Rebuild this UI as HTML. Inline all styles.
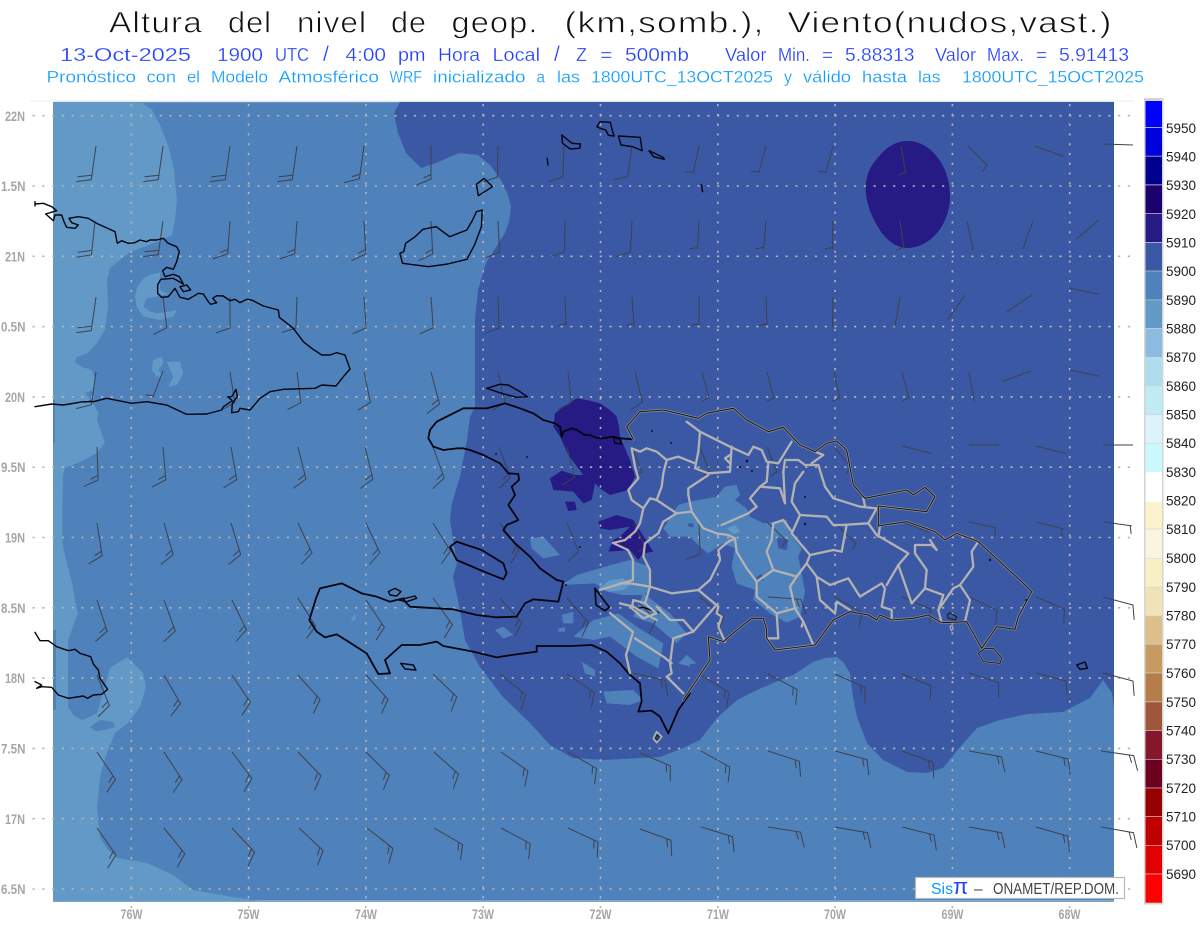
<!DOCTYPE html>
<html><head><meta charset="utf-8"><title>Altura del nivel de geop.</title>
<style>
html,body{margin:0;padding:0;background:#fff}
svg{display:block}
text{font-family:"Liberation Sans",sans-serif}
.t text{font-size:30px;fill:#111;stroke:#fff;stroke-width:.7px;letter-spacing:1px}
.l2 text{font-size:18.5px;fill:#2440ff;stroke:#fff;stroke-width:.25px}
.l3 text{font-size:17px;fill:#0a9aff;stroke:#fff;stroke-width:.25px}
.ax{font-size:14px;fill:#a6a6a6;font-weight:bold}
.cb{font-size:13.5px;fill:#222}
.k path,.k polygon{vector-effect:non-scaling-stroke}
.w use{stroke:#3d424e;stroke-width:1;fill:none}
</style></head><body>
<svg xmlns="http://www.w3.org/2000/svg" width="1200" height="927" viewBox="0 0 1200 927">
<rect width="1200" height="927" fill="#fff"/>
<g class="t">
<text x="109" y="32.5" textLength="94" lengthAdjust="spacingAndGlyphs">Altura</text>
<text x="228" y="32.5" textLength="44" lengthAdjust="spacingAndGlyphs">del</text>
<text x="297" y="32.5" textLength="70" lengthAdjust="spacingAndGlyphs">nivel</text>
<text x="391" y="32.5" textLength="36" lengthAdjust="spacingAndGlyphs">de</text>
<text x="451.5" y="32.5" textLength="87" lengthAdjust="spacingAndGlyphs">geop.</text>
<text x="564.5" y="32.5" textLength="200" lengthAdjust="spacingAndGlyphs">(km,somb.),</text>
<text x="787.5" y="32.5" textLength="325" lengthAdjust="spacingAndGlyphs">Viento(nudos,vast.)</text>
</g>
<g class="l2">
<text x="60" y="61" textLength="131" lengthAdjust="spacingAndGlyphs">13-Oct-2025</text>
<text x="217" y="61" textLength="46" lengthAdjust="spacingAndGlyphs">1900</text>
<text x="275" y="61" textLength="34" lengthAdjust="spacingAndGlyphs">UTC</text>
<text x="323" y="61" style="font-size:21px">/</text>
<text x="345.5" y="61" textLength="40.5" lengthAdjust="spacingAndGlyphs">4:00</text>
<text x="398" y="61" textLength="27.5" lengthAdjust="spacingAndGlyphs">pm</text>
<text x="438" y="61" textLength="42" lengthAdjust="spacingAndGlyphs">Hora</text>
<text x="492.5" y="61" textLength="47.5" lengthAdjust="spacingAndGlyphs">Local</text>
<text x="554" y="61" style="font-size:21px">/</text>
<text x="576" y="61" textLength="11" lengthAdjust="spacingAndGlyphs">Z</text>
<text x="600" y="61" textLength="12.5" lengthAdjust="spacingAndGlyphs">=</text>
<text x="625" y="61" textLength="64" lengthAdjust="spacingAndGlyphs">500mb</text>
<text x="725" y="61" textLength="41.5" lengthAdjust="spacingAndGlyphs">Valor</text>
<text x="778" y="61" textLength="32" lengthAdjust="spacingAndGlyphs">Min.</text>
<text x="822" y="61" textLength="11" lengthAdjust="spacingAndGlyphs">=</text>
<text x="845" y="61" textLength="69.5" lengthAdjust="spacingAndGlyphs">5.88313</text>
<text x="935" y="61" textLength="41" lengthAdjust="spacingAndGlyphs">Valor</text>
<text x="987" y="61" textLength="37" lengthAdjust="spacingAndGlyphs">Max.</text>
<text x="1036" y="61" textLength="11" lengthAdjust="spacingAndGlyphs">=</text>
<text x="1059" y="61" textLength="70" lengthAdjust="spacingAndGlyphs">5.91413</text>
</g>
<g class="l3">
<text x="46.5" y="82.5" textLength="89.5" lengthAdjust="spacingAndGlyphs">Pronóstico</text>
<text x="146.5" y="82.5" textLength="29.5" lengthAdjust="spacingAndGlyphs">con</text>
<text x="187" y="82.5" textLength="13" lengthAdjust="spacingAndGlyphs">el</text>
<text x="211" y="82.5" textLength="57" lengthAdjust="spacingAndGlyphs">Modelo</text>
<text x="278.5" y="82.5" textLength="100.5" lengthAdjust="spacingAndGlyphs">Atmosférico</text>
<text x="389.5" y="82.5" textLength="32.5" lengthAdjust="spacingAndGlyphs">WRF</text>
<text x="433" y="82.5" textLength="92.5" lengthAdjust="spacingAndGlyphs">inicializado</text>
<text x="536.5" y="82.5" textLength="8.5" lengthAdjust="spacingAndGlyphs">a</text>
<text x="557" y="82.5" textLength="23" lengthAdjust="spacingAndGlyphs">las</text>
<text x="591" y="82.5" textLength="182" lengthAdjust="spacingAndGlyphs">1800UTC_13OCT2025</text>
<text x="784" y="82.5" textLength="8" lengthAdjust="spacingAndGlyphs">y</text>
<text x="803" y="82.5" textLength="48" lengthAdjust="spacingAndGlyphs">válido</text>
<text x="862" y="82.5" textLength="45" lengthAdjust="spacingAndGlyphs">hasta</text>
<text x="918" y="82.5" textLength="22.5" lengthAdjust="spacingAndGlyphs">las</text>
<text x="962" y="82.5" textLength="182" lengthAdjust="spacingAndGlyphs">1800UTC_15OCT2025</text>
</g>

<rect x="30" y="100.5" width="1104" height="1" fill="#eeeeee"/>
<rect x="53" y="102" width="1061" height="799" fill="#4f81bb"/>
<rect x="53" y="900" width="1061" height="2" fill="#7aa8d3"/>
<rect x="53" y="101" width="1061" height="1.2" fill="#dfe6ee"/>
<g class="k">
<path fill="#6399c7" d="M53 102L141 102L152 110L160 125L168 145L174 170L177 200L175 220L172 235L157 242L130 252L110 268L107 280L108 307L105 330L97 343L88 353L77 357L75 362L82 367L92 370L95 380L93 390L85 393L93 403L98 413L97 420L105 443L97 453L80 462L65 468L63 475L62 530L63 547L72 583L77 610L78 613L68 640L68 707L74 716L83 720L97 713L104 690L110 668L127 657L143 673L146 687L140 707L128 723L115 733L106 755L100 777L97 807L100 837L108 850L117 858L147 863L173 875L193 890L233 897L260 901L53 901Z"/>
<path fill="#4f81bb" d="M90 727L100 720L113 722L115 727L105 730L95 731Z"/>
<rect x="53" y="630" width="3" height="80" fill="#4f81bb"/>
<rect x="53" y="400" width="2" height="43" fill="#4f81bb"/>
<g transform="translate(0,180) scale(.33333)" fill="#6399c7">
<path d="M405 350L412 320L430 295L450 284L480 278L480 330L495 338L510 340L470 350L440 355L430 380L450 395L470 400L510 395L530 390L520 410L480 420L430 410L410 380Z"/>
<path d="M455 570L460 540L485 530L490 550L475 570L490 590L470 590Z"/>
<path d="M500 545L540 545L550 580L530 615L505 620L520 590Z"/>
</g>
<path fill="#3b58a4" d="M400 102L394 113L398 133L406 153L421 168L436 163L459 153L478 155L490 165L501 180L508 195L511 207L509 222L505 233L486 263L478 290L475 320L475 380L475 407L470 417L467 440L460 477L452 503L450 520L453 540L457 563L453 577L460 610L465 640L480 667L503 697L530 723L550 745L573 758L605 760L640 758L660 757L683 748L700 740L717 718L737 700L757 690L773 683L793 675L813 662L825 658L837 657L843 662L850 673L853 697L857 717L867 743L883 760L907 772L927 773L943 768L960 747L977 728L1000 720L1027 714L1063 712L1090 698L1103 680L1112 693L1114 708L1114 102Z"/>
<path fill="#261a85" d="M908 141C930 141 950 165 950 196C950 225 930 248 907 248C888 248 875 225 869 208C863 190 865 172 876 160C885 148 895 141 908 141Z"/>
<g transform="translate(420,380) scale(.33333)" fill="#261a85">
<path d="M405 100L430 80L470 55L510 62L540 70L570 90L590 110L597 140L600 170L615 205L630 240L645 290L625 330L570 345L540 325L525 310L515 360L490 370L460 335L400 330L390 295L425 272L465 285L490 285L445 225L420 170L400 140Z"/>
<path d="M435 365L465 365L470 390L445 393Z"/>
<path d="M535 425L590 405L640 420L665 460L700 515L670 520L655 540L630 510L565 515L580 480L600 470L630 440L570 450L540 445Z"/>
</g>
<g transform="translate(620,400) scale(.33333)" fill="#4f81bb">
<path d="M160 340L175 315L210 305L290 290L315 260L350 255L360 285L345 300L380 325L390 350L430 370L470 365L500 360L510 400L545 445L535 470L545 520L555 575L540 650L500 668L450 640L400 600L405 570L350 550L335 500L345 445L310 430L265 460L245 445L210 410L150 410L130 385Z"/>
<path fill="#6399c7" d="M320 385L345 375L362 395L340 402Z"/>
<path fill="#3b58a4" d="M470 410L505 420L500 450L475 445Z"/>
<path fill="#3b58a4" d="M205 370L220 370L220 382L205 380Z"/>
<path fill="#3b58a4" d="M410 530L425 522L430 540L412 545Z"/>
<path d="M175 790L200 765L230 790L190 795Z"/>
</g>
<g transform="translate(290,520) scale(.33333)" fill="#4f81bb">
<path d="M815 195L860 165L945 140L1020 120L1080 140L1080 205L1065 225L1000 225L950 215L915 190Z"/>
<path d="M850 350L910 300L985 280L1040 320L1120 370L1105 445L1040 410L960 350L910 360Z"/>
<path d="M1060 220L1140 280L1190 340L1160 370L1090 310L1030 290Z"/>
<path d="M720 55L760 50L810 105L760 115L725 85Z"/>
<path d="M815 285L850 275L850 310L820 310Z"/>
<path d="M805 325L825 322L825 335L805 335Z"/>
<path d="M615 330L640 320L670 345L640 355Z"/>
<path d="M875 425L915 450L915 470L885 460Z"/>
<path d="M940 515L1030 510L1060 540L1020 555L950 550Z"/>
<path d="M1170 430L1195 405L1200 440Z"/>
<path fill="#6399c7" d="M925 205L960 180L1000 175L1020 195L1000 210L960 215Z"/>
<path fill="#6399c7" d="M183 295L195 285L198 297L187 303Z"/>
</g>
</g>

<g fill="none" stroke="#b8b4ae" stroke-width="1.6" stroke-dasharray="2.2 7.58">
<path d="M32.5 115.7H1135M32.5 186H1135M32.5 256.3H1135M32.5 326.6H1135M32.5 396.9H1135M32.5 467.2H1135M32.5 537.5H1135M32.5 607.8H1135M32.5 678.1H1135M32.5 748.4H1135M32.5 818.7H1135M32.5 889H1135"/>
<path d="M131.3 104V915M248.6 104V915M365.9 104V915M483.2 104V915M600.5 104V915M717.8 104V915M835.1 104V915M952.4 104V915M1069.7 104V915"/>
</g>

<defs>
<path id="A" d="M0 0V34L-14.5 38M0 29.5L-14 33"/>
<path id="B" d="M0 0V33L-14.5 39M0 28.5L-7.5 32"/>
<path id="C" d="M0 0V31L-14 36"/>
<path id="D" d="M0 0V28M0 26.5L-8 28.5"/>
<path id="E" d="M0 0V30"/>
</defs>
<g class="w">
<use href="#A" transform="translate(96,146)rotate(8)"/><use href="#A" transform="translate(163,146)rotate(8)"/><use href="#A" transform="translate(230,146)rotate(8)"/><use href="#A" transform="translate(297,146)rotate(8)"/><use href="#B" transform="translate(364,146)rotate(8)"/><use href="#B" transform="translate(431,146)rotate(0)"/><use href="#C" transform="translate(498,146)rotate(1)"/><use href="#C" transform="translate(564,146)rotate(2)"/><use href="#C" transform="translate(632,146)rotate(8)"/><use href="#D" transform="translate(699,146)rotate(12)"/><use href="#D" transform="translate(766,146)rotate(15)"/><use href="#D" transform="translate(833,146)rotate(15)"/><use href="#D" transform="translate(901,146)rotate(-10)"/><use href="#D" transform="translate(968,146)rotate(-45)"/><use href="#E" transform="translate(1035,146)rotate(-70)"/><use href="#E" transform="translate(1103,144)rotate(-88)"/>
<use href="#A" transform="translate(95,221)rotate(6)"/><use href="#A" transform="translate(163,221)rotate(8)"/><use href="#B" transform="translate(230,221)rotate(4)"/><use href="#B" transform="translate(297,221)rotate(4)"/><use href="#B" transform="translate(364,221)rotate(-3)"/><use href="#B" transform="translate(431,221)rotate(-3)"/><use href="#C" transform="translate(498,221)rotate(-3)"/><use href="#C" transform="translate(565,221)rotate(1)"/><use href="#C" transform="translate(632,221)rotate(3)"/><use href="#D" transform="translate(699,221)rotate(3)"/><use href="#D" transform="translate(766,221)rotate(5)"/><use href="#D" transform="translate(833,221)rotate(1)"/><use href="#D" transform="translate(900,221)rotate(-8)"/><use href="#E" transform="translate(967,221)rotate(-12)"/><use href="#E" transform="translate(1033,221)rotate(20)"/><use href="#E" transform="translate(1099,220)rotate(50)"/>
<use href="#A" transform="translate(96,297)rotate(8)"/><use href="#C" transform="translate(163,297)rotate(-7)"/><use href="#C" transform="translate(230,297)rotate(0)"/><use href="#C" transform="translate(297,297)rotate(2)"/><use href="#C" transform="translate(364,297)rotate(-4)"/><use href="#C" transform="translate(431,297)rotate(-4)"/><use href="#C" transform="translate(498,297)rotate(-2)"/><use href="#D" transform="translate(565,297)rotate(-2)"/><use href="#D" transform="translate(632,297)rotate(-4)"/><use href="#D" transform="translate(699,297)rotate(0)"/><use href="#D" transform="translate(766,297)rotate(-2)"/><use href="#E" transform="translate(833,297)rotate(1)"/><use href="#E" transform="translate(900,297)rotate(10)"/><use href="#E" transform="translate(965,295)rotate(35)"/><use href="#E" transform="translate(1032,295)rotate(56)"/><use href="#E" transform="translate(1069,288)rotate(-78)"/>
<use href="#B" transform="translate(96,372)rotate(8)"/><use href="#D" transform="translate(163,371)rotate(21)"/><use href="#C" transform="translate(230,372)rotate(-9)"/><use href="#C" transform="translate(297,372)rotate(-7)"/><use href="#C" transform="translate(364,372)rotate(-12)"/><use href="#B" transform="translate(431,372)rotate(-15)"/><use href="#C" transform="translate(498,372)rotate(-13)"/><use href="#C" transform="translate(568,372)rotate(-6)"/><use href="#C" transform="translate(635,372)rotate(-14)"/><use href="#D" transform="translate(702,372)rotate(-15)"/><use href="#D" transform="translate(767,372)rotate(-15)"/><use href="#D" transform="translate(834,372)rotate(-12)"/><use href="#D" transform="translate(902,372)rotate(-15)"/><use href="#E" transform="translate(969,372)rotate(-10)"/><use href="#E" transform="translate(1031,371)rotate(70)"/><use href="#E" transform="translate(1070,370)rotate(-78)"/>
<use href="#B" transform="translate(97,447)rotate(-2)"/><use href="#B" transform="translate(163,447)rotate(-5)"/><use href="#B" transform="translate(231,447)rotate(-10)"/><use href="#B" transform="translate(298,447)rotate(-14)"/><use href="#B" transform="translate(365,447)rotate(-14)"/><use href="#B" transform="translate(433,447)rotate(-20)"/><use href="#B" transform="translate(499,447)rotate(-20)"/><use href="#C" transform="translate(567,447)rotate(-14)"/><use href="#D" transform="translate(632,447)rotate(-22)"/><use href="#D" transform="translate(700,447)rotate(-21)"/><use href="#D" transform="translate(767,447)rotate(-22)"/><use href="#D" transform="translate(834,447)rotate(-40)"/><use href="#E" transform="translate(902,446)rotate(-76)"/><use href="#E" transform="translate(969,445)rotate(-90)"/><use href="#E" transform="translate(1036,446)rotate(-76)"/><use href="#E" transform="translate(1103,445)rotate(-90)"/>
<use href="#B" transform="translate(97,523)rotate(-9)"/><use href="#B" transform="translate(164,523)rotate(-16)"/><use href="#B" transform="translate(231,523)rotate(-17)"/><use href="#B" transform="translate(298,523)rotate(-25)"/><use href="#B" transform="translate(366,523)rotate(-25)"/><use href="#B" transform="translate(433,523)rotate(-32)"/><use href="#B" transform="translate(500,523)rotate(-35)"/><use href="#C" transform="translate(567,523)rotate(-22)"/><use href="#D" transform="translate(634,523)rotate(-24)"/><use href="#C" transform="translate(699,523)rotate(-2)"/><use href="#D" transform="translate(767,522)rotate(-46)"/><use href="#D" transform="translate(837,525)rotate(-46)"/><use href="#E" transform="translate(902,522)rotate(-70)"/><use href="#D" transform="translate(969,522)rotate(-78)"/><use href="#D" transform="translate(1036,522)rotate(-76)"/><use href="#D" transform="translate(1104,522)rotate(-82)"/>
<use href="#B" transform="translate(97,600)rotate(-18)"/><use href="#B" transform="translate(164,600)rotate(-20)"/><use href="#B" transform="translate(232,600)rotate(-26)"/><use href="#B" transform="translate(298,598)rotate(-32)"/><use href="#B" transform="translate(366,600)rotate(-34)"/><use href="#B" transform="translate(433,598)rotate(-36)"/><use href="#B" transform="translate(500,598)rotate(-41)"/><use href="#B" transform="translate(567,598)rotate(-41)"/><use href="#C" transform="translate(634,598)rotate(-45)"/><use href="#C" transform="translate(700,597)rotate(-50)"/><use href="#B" transform="translate(768,597)rotate(-86)"/><use href="#C" transform="translate(835,597)rotate(-60)"/><use href="#C" transform="translate(902,597)rotate(-67)"/><use href="#C" transform="translate(969,597)rotate(-65)"/><use href="#C" transform="translate(1036,597)rotate(-67)"/><use href="#C" transform="translate(1103,597)rotate(-75)"/>
<use href="#B" transform="translate(97,675)rotate(-22)"/><use href="#B" transform="translate(164,675)rotate(-30)"/><use href="#B" transform="translate(232,675)rotate(-34)"/><use href="#B" transform="translate(298,675)rotate(-42)"/><use href="#B" transform="translate(366,675)rotate(-42)"/><use href="#B" transform="translate(433,674)rotate(-46)"/><use href="#B" transform="translate(500,674)rotate(-51)"/><use href="#B" transform="translate(567,674)rotate(-56)"/><use href="#B" transform="translate(633,673)rotate(-77)"/><use href="#B" transform="translate(701,675)rotate(-58)"/><use href="#B" transform="translate(768,674)rotate(-62)"/><use href="#B" transform="translate(835,674)rotate(-66)"/><use href="#C" transform="translate(902,674)rotate(-68)"/><use href="#C" transform="translate(969,673)rotate(-72)"/><use href="#C" transform="translate(1036,673)rotate(-75)"/><use href="#C" transform="translate(1103,673)rotate(-75)"/>
<use href="#B" transform="translate(97,752)rotate(-34)"/><use href="#B" transform="translate(164,752)rotate(-33)"/><use href="#B" transform="translate(232,752)rotate(-37)"/><use href="#B" transform="translate(298,752)rotate(-44)"/><use href="#B" transform="translate(366,752)rotate(-45)"/><use href="#B" transform="translate(434,752)rotate(-48)"/><use href="#B" transform="translate(501,752)rotate(-55)"/><use href="#B" transform="translate(568,752)rotate(-60)"/><use href="#B" transform="translate(640,753)rotate(-67)"/><use href="#B" transform="translate(701,751)rotate(-61)"/><use href="#B" transform="translate(768,751)rotate(-72)"/><use href="#B" transform="translate(835,751)rotate(-75)"/><use href="#B" transform="translate(902,751)rotate(-70)"/><use href="#B" transform="translate(969,751)rotate(-80)"/><use href="#B" transform="translate(1036,751)rotate(-76)"/><use href="#B" transform="translate(1101,751)rotate(-82)"/>
<use href="#B" transform="translate(97,828)rotate(-35)"/><use href="#B" transform="translate(164,828)rotate(-39)"/><use href="#B" transform="translate(232,828)rotate(-43)"/><use href="#B" transform="translate(299,828)rotate(-47)"/><use href="#B" transform="translate(367,828)rotate(-52)"/><use href="#B" transform="translate(434,828)rotate(-60)"/><use href="#B" transform="translate(501,828)rotate(-62)"/><use href="#B" transform="translate(568,828)rotate(-65)"/><use href="#B" transform="translate(640,829)rotate(-70)"/><use href="#B" transform="translate(701,827)rotate(-73)"/><use href="#B" transform="translate(768,827)rotate(-81)"/><use href="#B" transform="translate(835,827)rotate(-80)"/><use href="#B" transform="translate(902,827)rotate(-76)"/><use href="#B" transform="translate(969,827)rotate(-80)"/><use href="#B" transform="translate(1036,827)rotate(-74)"/><use href="#B" transform="translate(1101,827)rotate(-80)"/>
</g>

<g class="k" fill="none" stroke-linejoin="round" stroke-linecap="round">
<g stroke="#050510" stroke-width="1.4">
<g transform="translate(0,180) scale(.33333)">
<path d="M105 78L105 65M105 72L130 70L155 80L170 92L137 102L160 122L165 105L185 105L192 125L200 142L225 145L235 135L215 128L207 115L235 110L265 115L290 130L345 155L352 190L365 182L385 190L405 188L420 180L440 185L450 180L470 180L490 175L505 190L530 200L538 215L530 245L520 268L500 262L488 272L495 290L520 283L538 290L550 312L520 295L482 298L473 315L473 340L485 352L505 350L525 325L540 352L565 358L595 340L610 342L625 365L632 373L650 368L638 355L650 347L670 348L690 362L705 358L720 368L740 358L755 360L790 378L835 390L838 412L880 445L910 485L935 505L965 525L990 525L1010 518L1035 525L1050 567L1030 590L1008 618L965 615L945 625L850 628L810 635L780 655L750 690L720 685L715 695L695 698L697 670L712 650L708 628L695 650L683 650L697 662L670 680L665 690L620 702L560 703L500 675L440 665L395 670L320 655L280 665L250 665L190 675L155 672L105 680"/>
<path d="M540 320L560 315L572 330L550 335Z"/>
</g>
<g transform="translate(0,600) scale(.33333)">
<path d="M105 97L120 122L145 122L170 140L205 152L225 148L240 160L272 170L280 192L295 210L300 235L323 268L305 283L280 285L262 295L250 288L205 295L175 285L155 262L125 260L110 265L125 255L105 245"/>
</g>
<g transform="scale(.38267,.33333)">
<path d="M1260 630L1245 635L1235 660L1220 690L1175 710L1140 680L1105 688L1085 710L1060 730L1055 755L1045 760L1052 790L1120 800L1170 792L1220 778L1240 735L1258 680Z"/>
<path d="M1265 535L1245 553L1250 587L1287 560Z"/>
<path d="M1468 405L1470 430L1490 447L1515 445L1517 432L1495 430Z"/>
<path d="M1430 475L1432 495"/>
</g>
<g transform="translate(600,0) scale(.38267,.33333)">
<path d="M-8 380L0 365L27 367L33 395L37 408L22 406L15 390L0 385Z"/>
<path d="M48 408L105 412L110 452L85 440L55 435Z"/>
<path d="M128 452L165 472L168 478L140 470Z"/>
<path d="M265 553L268 575"/>
</g>
<g transform="translate(640,640) scale(.33333)">
<path d="M1310 75L1335 66L1342 85L1320 88Z"/>
</g>
<g transform="translate(420,380) scale(.33333)">
<path d="M200 25L240 13L265 15L300 35L322 50L290 52L245 40Z"/>
<path stroke-width="1.8" d="M640 178L600 175L580 170L545 175L525 172L510 165L495 165L470 150L455 145L430 155L425 170L420 140L405 130L370 120L340 100L300 85L255 70L200 85L160 85L130 85L100 100L50 125L30 150L25 175L40 200L70 210L110 205L130 205L150 210L190 225L240 250L265 280L295 282L297 300L275 320L285 345L265 375L295 420L260 435L250 450L285 490L330 530L360 565L410 600"/>
<path d="M580 172L600 178L605 192L585 190Z"/>
</g>
<g transform="translate(290,520) scale(.33333)">
<path stroke-width="1.8" d="M800 180L820 185L805 245L730 238L705 250L680 290L620 292L560 285L490 268L360 260L345 245L340 235L300 245L260 230L215 220L155 190L90 205L78 235L58 300L80 335L105 352L140 343L175 365L230 400L265 462L300 460L285 420L335 375L390 375L440 365L460 378L550 395L620 412L665 405L740 395L740 378L840 378L905 375L950 395L990 430L1015 460L1050 490L1055 545L1045 575L1085 572L1110 590L1135 640L1165 570L1200 520"/>
<path stroke-width="1.8" d="M480 80L500 65L575 90L640 130L650 160L640 178L575 152L500 120Z"/>
<path d="M295 215L315 205L333 215L320 228L300 225Z"/>
<path d="M325 240L375 228L380 235L350 245Z"/>
<path d="M332 430L370 435L378 450L345 447Z"/>
<path stroke-width="1.6" d="M915 205L958 262L945 272L918 255Z"/>
<path d="M1025 268L1060 262L1105 278L1060 295Z"/>
</g>
</g>

<g stroke="#b2b2b2" stroke-width="2.3" transform="translate(620,400) scale(.33333)">
<path d="M35 145L60 155L80 145L110 155L140 180L175 170L225 190"/>
<path d="M200 65L240 95L330 140L385 165L400 140L425 150L440 185L475 190L515 125"/>
<path d="M240 95L235 155L225 205L265 220L330 215L335 140M330 165L315 175L330 190"/>
<path d="M140 180L130 220L125 260L110 300L170 340L215 335L205 285L205 265L265 225"/>
<path d="M110 300L90 295L70 325L60 370L45 395L15 420"/>
<path d="M215 335L250 385L290 400L325 405L345 415L350 455L380 505L410 545L460 510L530 530L560 490L570 465L640 450L665 455L680 375L640 375L620 350L540 345L520 390L515 400L570 465"/>
<path d="M130 365L170 340M130 365L115 400L75 430L70 470L90 510L90 560L30 550L0 550"/>
<path d="M90 560L155 580L235 570L295 620L290 640L305 650L295 680L315 725"/>
<path d="M235 570L270 540L300 480L295 450L325 425L345 415"/>
<path d="M305 375L385 340L410 320L390 295L420 260L440 245L445 190"/>
<path d="M420 260L480 265L495 310L490 215L495 180L535 180L555 195L595 195L615 260L640 295L720 320L770 325"/>
<path d="M575 190L610 165L585 155"/>
<path d="M550 215L525 250L515 305L540 345"/>
<path d="M460 370L490 360L515 395"/>
<path d="M460 370L455 420L440 455L460 510"/>
<path d="M410 545L410 590L470 640L475 715L440 715"/>
<path d="M470 640L525 625L510 560L530 530"/>
<path d="M525 625L550 665L580 735M550 665L545 680"/>
<path d="M560 490L590 530L600 600L645 640L650 605L690 630"/>
<path d="M590 530L630 555L685 535L720 590L785 550L795 565L785 620L815 630L815 655"/>
<path d="M665 375L745 370L770 325"/>
<path d="M745 370L770 405L865 460L835 495L800 555"/>
<path d="M835 495L875 610L915 565L920 510L885 460L885 435L935 435L950 450L930 420"/>
<path d="M915 565L970 585L955 630L965 668"/>
<path d="M1075 425L1055 455L1060 500L1020 555L1050 600L1035 665"/>
<path d="M1020 555L1000 565L955 630"/>
<path d="M780 378L775 410M730 295L735 318"/>
<path d="M0 610L40 620L75 640L110 660M90 560L75 610M110 620L150 660L190 660L220 695L285 620"/>
<path d="M220 695L160 715L150 790L155 820L140 830L190 880"/>
<path d="M45 715L130 770L155 790"/>
<path d="M40 600L75 610L110 640L70 655L35 625Z"/>
<path d="M35 145L45 200L55 235L25 270L35 300L70 325"/>
<path d="M15 420L-21 429L24 450L39 480L39 540L9 549L-60 570"/>
<path d="M-30 639L39 696L18 765L30 819"/>
</g>
<g transform="translate(620,400) scale(.33333)">
<path stroke="#9a9a9a" stroke-width="2.4" d="M190 900L270 780L265 710L310 725L345 695L395 655L430 655L440 690L440 715L465 750L585 735L640 660L690 635L745 645L770 660L780 645L815 660L880 655L925 645L965 668L1040 665L1085 745L1130 680L1185 688L1195 650L1235 575L1210 550L1075 425L1010 400L975 420L945 395L860 365L775 378L775 318L920 335L945 290L915 262L880 285L860 270L735 295L700 255L680 150L650 123L620 130L585 155L540 135L490 82L445 95L380 60L340 25L260 40L235 55L130 30L60 35L20 80L40 118"/>
<path stroke="#15171c" stroke-width="1.1" d="M190 900L270 780L265 710L310 725L345 695L395 655L430 655L440 690L440 715L465 750L585 735L640 660L690 635L745 645L770 660L780 645L815 660L880 655L925 645L965 668L1040 665L1085 745L1130 680L1185 688L1195 650L1235 575L1210 550L1075 425L1010 400L975 420L945 395L860 365L775 378L775 318L920 335L945 290L915 262L880 285L860 270L735 295L700 255L680 150L650 123L620 130L585 155L540 135L490 82L445 95L380 60L340 25L260 40L235 55L130 30L60 35L20 80L40 118"/>
<path stroke="#9a9a9a" stroke-width="2" d="M1075 760L1095 745L1120 745L1145 775L1140 790L1090 785Z"/>
<path stroke="#15171c" stroke-width="1" d="M1075 760L1095 745L1120 745L1145 775L1140 790L1090 785Z"/>
<path stroke="#15171c" stroke-width="1" d="M982 645L990 638L1000 645L1010 650L1006 660L985 655Z"/>
<path stroke="#aeaeae" stroke-width="1.2" d="M990 680L996 676L1000 686L994 692Z"/>
</g>
<g transform="translate(640,640) scale(.33333)">
<path stroke="#aeaeae" stroke-width="1.8" d="M40 295L50 275L65 290L50 308Z"/>
<path stroke="#15171c" stroke-width="1" d="M46 295L52 285L58 292L52 300Z"/>
</g>
</g>

<g fill="#10131c">
<circle cx="652" cy="431" r="1"/><circle cx="671" cy="443" r="1"/><circle cx="747" cy="461" r="1.3"/><circle cx="740" cy="467" r="1"/><circle cx="752" cy="471" r="1"/><circle cx="805" cy="524" r="1.2"/><circle cx="805" cy="497" r="1"/><circle cx="990" cy="560" r="1.2"/><circle cx="1026" cy="600" r="1"/><circle cx="496" cy="454" r="1"/><circle cx="527" cy="457" r="1"/><circle cx="580" cy="547" r="1"/><circle cx="566" cy="585" r="1"/>
</g>

<g class="ax">
<text x="5" y="121" textLength="20" lengthAdjust="spacingAndGlyphs">22N</text>
<text x="1" y="191" textLength="24.5" lengthAdjust="spacingAndGlyphs">1.5N</text>
<text x="5" y="261.5" textLength="20" lengthAdjust="spacingAndGlyphs">21N</text>
<text x="1" y="331.5" textLength="24.5" lengthAdjust="spacingAndGlyphs">0.5N</text>
<text x="5" y="402" textLength="20" lengthAdjust="spacingAndGlyphs">20N</text>
<text x="1" y="472" textLength="24.5" lengthAdjust="spacingAndGlyphs">9.5N</text>
<text x="5" y="542.5" textLength="20" lengthAdjust="spacingAndGlyphs">19N</text>
<text x="1" y="613" textLength="24.5" lengthAdjust="spacingAndGlyphs">8.5N</text>
<text x="5" y="683" textLength="20" lengthAdjust="spacingAndGlyphs">18N</text>
<text x="1" y="753.5" textLength="24.5" lengthAdjust="spacingAndGlyphs">7.5N</text>
<text x="5" y="824" textLength="20" lengthAdjust="spacingAndGlyphs">17N</text>
<text x="1" y="894" textLength="24.5" lengthAdjust="spacingAndGlyphs">6.5N</text>
<text x="120.5" y="919" textLength="22" lengthAdjust="spacingAndGlyphs">76W</text>
<text x="237.5" y="919" textLength="22" lengthAdjust="spacingAndGlyphs">75W</text>
<text x="355" y="919" textLength="22" lengthAdjust="spacingAndGlyphs">74W</text>
<text x="472" y="919" textLength="22" lengthAdjust="spacingAndGlyphs">73W</text>
<text x="589.5" y="919" textLength="22" lengthAdjust="spacingAndGlyphs">72W</text>
<text x="707" y="919" textLength="22" lengthAdjust="spacingAndGlyphs">71W</text>
<text x="824" y="919" textLength="22" lengthAdjust="spacingAndGlyphs">70W</text>
<text x="941.5" y="919" textLength="22" lengthAdjust="spacingAndGlyphs">69W</text>
<text x="1058.5" y="919" textLength="22" lengthAdjust="spacingAndGlyphs">68W</text>
</g>

<rect x="915.5" y="877.5" width="209" height="21" fill="#fff" stroke="#b8b8b8" stroke-width="1.2"/>
<text x="931" y="894" style="font-size:15.5px" fill="#0a9aff" textLength="22" lengthAdjust="spacingAndGlyphs">Sis</text>
<text x="953" y="894" style="font-size:22px" fill="#2440ff">π</text>
<text x="974" y="894" style="font-size:15.5px" fill="#444">–</text>
<text x="993" y="894" style="font-size:15.5px" fill="#444" textLength="126" lengthAdjust="spacingAndGlyphs">ONAMET/REP.DOM.</text>

<rect x="1144" y="98" width="19.5" height="806.5" fill="#d4d4d4"/>
<g>
<rect x="1145.5" y="101" width="16.5" height="26.2" fill="#0000ff"/>
<rect x="1145.5" y="128" width="16.5" height="27.8" fill="#0000dc"/>
<rect x="1145.5" y="156.5" width="16.5" height="28" fill="#00008f"/>
<rect x="1145.5" y="185.3" width="16.5" height="28" fill="#1b006e"/>
<rect x="1145.5" y="214" width="16.5" height="28" fill="#271a85"/>
<rect x="1145.5" y="242.7" width="16.5" height="28" fill="#3b58a4"/>
<rect x="1145.5" y="271.3" width="16.5" height="28.3" fill="#4f81bb"/>
<rect x="1145.5" y="300.2" width="16.5" height="28" fill="#6399c7"/>
<rect x="1145.5" y="329" width="16.5" height="28" fill="#8bbcdf"/>
<rect x="1145.5" y="357.5" width="16.5" height="28.2" fill="#b0dcef"/>
<rect x="1145.5" y="386.3" width="16.5" height="28" fill="#c0ebf5"/>
<rect x="1145.5" y="415" width="16.5" height="28" fill="#dcf3fa"/>
<rect x="1145.5" y="443.6" width="16.5" height="28.4" fill="#ccf9fe"/>
<rect x="1145.5" y="472" width="16.5" height="30" fill="#ffffff"/>
<rect x="1145.5" y="502" width="16.5" height="26.7" fill="#faf3cb"/>
<rect x="1145.5" y="529.3" width="16.5" height="28.6" fill="#fbf5df"/>
<rect x="1145.5" y="558.5" width="16.5" height="28.4" fill="#f8efc4"/>
<rect x="1145.5" y="587.5" width="16.5" height="28" fill="#efe3b7"/>
<rect x="1145.5" y="616.2" width="16.5" height="27.8" fill="#dcc08b"/>
<rect x="1145.5" y="644.6" width="16.5" height="28" fill="#c59a63"/>
<rect x="1145.5" y="673.3" width="16.5" height="28.2" fill="#b67c49"/>
<rect x="1145.5" y="702.2" width="16.5" height="28.2" fill="#a0563a"/>
<rect x="1145.5" y="731" width="16.5" height="28" fill="#84182a"/>
<rect x="1145.5" y="759.6" width="16.5" height="28" fill="#6b0020"/>
<rect x="1145.5" y="788.3" width="16.5" height="28" fill="#960000"/>
<rect x="1145.5" y="817" width="16.5" height="28" fill="#c00000"/>
<rect x="1145.5" y="845.6" width="16.5" height="28" fill="#e00000"/>
<rect x="1145.5" y="874.3" width="16.5" height="28.4" fill="#ff0000"/>
</g>
<g class="cb">
<text x="1166" y="133">5950</text><text x="1166" y="161.5">5940</text><text x="1166" y="190">5930</text><text x="1166" y="219">5920</text><text x="1166" y="247.5">5910</text><text x="1166" y="276">5900</text><text x="1166" y="305">5890</text><text x="1166" y="333.5">5880</text><text x="1166" y="362">5870</text><text x="1166" y="391">5860</text><text x="1166" y="419.5">5850</text><text x="1166" y="448">5840</text><text x="1166" y="477">5830</text><text x="1166" y="505.5">5820</text><text x="1166" y="534">5810</text><text x="1166" y="563">5800</text><text x="1166" y="592">5790</text><text x="1166" y="620.5">5780</text><text x="1166" y="649">5770</text><text x="1166" y="678">5760</text><text x="1166" y="707">5750</text><text x="1166" y="735.5">5740</text><text x="1166" y="764">5730</text><text x="1166" y="793">5720</text><text x="1166" y="821.5">5710</text><text x="1166" y="850">5700</text><text x="1166" y="879">5690</text>
</g>
</svg>
</body></html>
